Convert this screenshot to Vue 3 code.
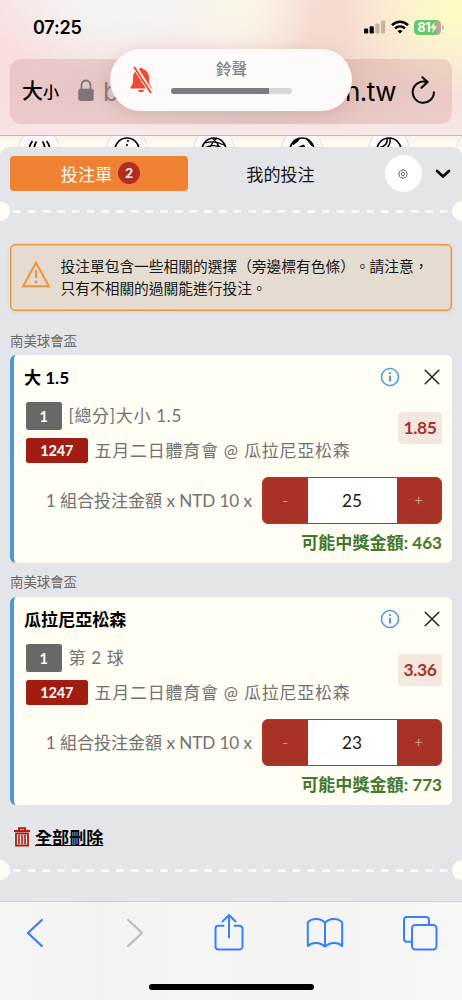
<script setup>
const bets = [
  { league: '南美球會盃', title: '大 1.5', market: '[總分]大小 1.5', odds: '1.85', stake: 25, payout: 463 },
  { league: '南美球會盃', title: '瓜拉尼亞松森', market: '第 2 球', odds: '3.36', stake: 23, payout: 773 }
]
</script>

<template>
  <div class="phone">
    <header class="browser">
      <div class="status">
        <span class="time">07:25</span>
        <div class="signals">
          <svg class="cell" width="22" height="14" viewBox="0 0 22 14">
            <rect x="0" y="8.5" width="4.2" height="5" rx="1.2" />
            <rect x="5.6" y="6.3" width="4.2" height="7.2" rx="1.2" />
            <rect x="11.3" y="3.4" width="4.2" height="10.1" rx="1.2" opacity=".22" />
            <rect x="17" y=".6" width="4.2" height="12.9" rx="1.2" opacity=".22" />
          </svg>
          <svg class="wifi" width="18" height="14" viewBox="0 0 18 14" fill="none" stroke="#000" stroke-width="2.5">
            <path d="M1 5.2C5.500.6 12.500.6 17 5.200" />
            <path d="M4 8.400C6.900 5.700 11.100 5.700 14 8.400" />
            <path d="M6.500 11L9 13.600L11.500 11C10 9.700 8 9.700 6.500 11Z" fill="#000" stroke="none" />
          </svg>
          <div class="battery">
            <span>81</span>
            <svg width="7" height="11" viewBox="0 0 7 11"><path d="M4.700 0L0 6.200H3L2.200 11L7 4.600H4Z" fill="#fff" /></svg>
          </div>
          <i class="nub"></i>
        </div>
      </div>
      <div class="address">
        <span class="aa">大<small>小</small></span>
        <svg class="lock" width="16" height="23" viewBox="0 0 16 23">
          <path d="M3.500 11V6.500a4.500 5 0 0 1 9 0V11" fill="none" stroke="#80747a" stroke-width="1.800" />
          <rect x=".3" y="9.700" width="15.400" height="12.300" rx="2" fill="#80747a" />
        </svg>
        <span class="url-start">b</span>
        <span class="url-end">n.tw</span>
        <svg class="reload" width="25" height="29" viewBox="0 0 25 29" fill="none" stroke="#000" stroke-width="2" stroke-linecap="round" stroke-linejoin="round">
          <path d="M15.500 6.100A10.600 10.600 0 1 0 22.900 16.200" />
          <path d="M11.400 1.300L16.600 6.100L10.500 11.800" />
        </svg>
      </div>
    </header>

    <div class="sports">
      <span><svg viewBox="0 0 26 26"><path d="M6.500 4C4.500 6.500 3.300 8.500 3 13M10.500 4.500C9 6.500 8.200 8.500 8 13M20.500 4C22.500 6.500 23.700 8.500 24 13M16.500 4.500C18 6.500 18.800 8.500 19 13" /></svg></span>
      <span><svg viewBox="0 0 26 26"><circle cx="13" cy="13" r="12" /><path d="M14 3C14 7 12 11 8 14" stroke-dasharray="2 2.200" /></svg></span>
      <span><svg viewBox="0 0 26 26"><circle cx="13" cy="13" r="12" /><path d="M4 6C10 4 17 5 23 8M2 12C9 7 17 8 25 13M16 1C11 5 9 9 8 14M11 1C15 4 18 8 20 14" stroke-width="1.300" /></svg></span>
      <span><svg viewBox="0 0 26 26"><circle cx="13" cy="13" r="12" /><path d="M4 5L10 1L10 3L4 8ZM17 1L22 5L23 9L19 4ZM10 10L15 8L16 13H14L13 11L10 12Z" fill="#000" stroke-width="1" /></svg></span>
      <span><svg viewBox="0 0 26 26"><circle cx="13" cy="13" r="12" /><path d="M11 1C12 6 9 10 2 11M14 1C15 7 12 10 8 14" stroke-width="1.500" /></svg></span>
      <span></span>
    </div>

    <main class="sheet">
      <nav class="tabs">
        <button class="tab active">投注單<b>2</b></button>
        <button class="tab">我的投注</button>
        <button class="settings">
          <svg width="10" height="10" viewBox="0 0 20 20" fill="none" stroke="#444" stroke-width="1.500">
            <path d="M8 1.500h4l.7 2.200 2.200-.7 2.700 2.800-1.100 2 2.200 1.200v2.200l-2.200 1.100 1 2.100-2.700 2.700-2.100-1.100-1 2.500H8.200L7.400 16l-2.300 1-2.600-2.700 1-2.100L1.300 11V9l2.200-1.100-1-2.200L5.200 3l2.100.8z" />
            <circle cx="10" cy="10" r="3.300" />
          </svg>
        </button>
        <svg class="chevron" width="16" height="10" viewBox="0 0 16 10" fill="none" stroke="#000" stroke-width="2.700" stroke-linecap="round"><path d="M2 2L8 7.500L14 2" /></svg>
      </nav>

      <div class="perforation">
        <svg width="436" height="3"><path d="M0 1.500H436" stroke="#fffdf4" stroke-width="2.600" stroke-dasharray="7.600 7.120" /></svg>
      </div>

      <div class="alert">
        <svg width="30" height="28" viewBox="0 0 30 28" fill="none" stroke="#ef9438" stroke-width="2">
          <path d="M15 2.700L28 26.200H2Z" />
          <path d="M15 10V18M15 20.500V23.200" stroke-width="2.200" />
        </svg>
        <p>投注單包含一些相關的選擇（旁邊標有色條）。請注意，<br />只有不相關的過關能進行投注。</p>
      </div>

      <section v-for="bet in bets" :key="bet.title">
        <h3>{{ bet.league }}</h3>
        <article class="card">
          <div class="title">
            <strong>{{ bet.title }}</strong>
            <svg class="info" width="20" height="20" viewBox="0 0 20 20" fill="none" stroke="#539ddd">
              <circle cx="10" cy="10" r="8.500" stroke-width="1.600" />
              <path d="M10 5.300V7.100M10 8.800V14.500" stroke-width="2.200" />
            </svg>
            <svg class="close" width="16" height="16" viewBox="0 0 16 16" fill="none" stroke="#222" stroke-width="1.500" stroke-linecap="round"><path d="M1.200 1.200L14.800 14.800M14.800 1.200L1.200 14.800" /></svg>
          </div>
          <div class="details">
            <div class="lines">
              <div class="line"><span class="tag gray">1</span><span class="label">{{ bet.market }}</span></div>
              <div class="line teams"><span class="tag red">1247</span><span class="label">五月二日體育會 @ 瓜拉尼亞松森</span></div>
            </div>
            <span class="odds">{{ bet.odds }}</span>
          </div>
          <div class="stake">
            <span class="formula">1 組合投注金額 x NTD 10 x</span>
            <div class="stepper">
              <button>-</button>
              <span class="value">{{ bet.stake }}</span>
              <button>+</button>
            </div>
          </div>
          <div class="payout">可能中獎金額: {{ bet.payout }}</div>
        </article>
      </section>

      <div class="clear">
        <svg width="16" height="20" viewBox="0 0 16 20" fill="none" stroke="#aa2117">
          <path d="M0 4H16M5 3V1.200H11V3" stroke-width="2" />
          <path d="M2 6.500V18.500H14V6.500Z" stroke-width="1.800" />
          <path d="M5 8V17M8 8V17M11 8V17" stroke-width="1.600" />
        </svg>
        <a>全部刪除</a>
      </div>

      <div class="perforation last">
        <svg width="436" height="3"><path d="M0 1.500H436" stroke="#fffdf4" stroke-width="2.600" stroke-dasharray="7.600 7.120" /></svg>
      </div>
    </main>

    <footer class="toolbar">
      <div class="actions">
        <svg class="back" width="18" height="30" viewBox="0 0 18 30"><path d="M15.800 2L2 15L15.800 28" /></svg>
        <svg class="forward" width="18" height="30" viewBox="0 0 18 30"><path d="M2.200 2L16 15L2.200 28" /></svg>
        <svg class="share" width="32" height="38" viewBox="0 0 32 38"><path d="M10.500 12.800H5.500a3 3 0 0 0-3 3V33.500a3 3 0 0 0 3 3H26.500a3 3 0 0 0 3-3V15.800a3 3 0 0 0-3-3H21.500M16 24.500V2.300M9.500 8.500L16 2L22.500 8.500" /></svg>
        <svg class="book" width="38" height="32" viewBox="0 0 38 32"><path d="M19 6C15 1 6 .6 1.800 5.500V29C6 25 14 25 19 29.800C24 25 32 25 36.200 29V5.500C32 .6 23 1 19 6ZM19 6V29.800" /></svg>
        <svg class="pages" width="36" height="36" viewBox="0 0 36 36"><path d="M9.500 26.800H5a3 3 0 0 1-3-3V5a3 3 0 0 1 3-3H24a3 3 0 0 1 3 3V9.500" /><rect x="10" y="10" width="24.500" height="24.500" rx="3.200" /></svg>
      </div>
      <div class="home"></div>
    </footer>

    <div class="ringer">
      <svg width="24" height="28" viewBox="0 0 24 28">
        <path d="M1.500 22.500V21C4 19 4 16 4 12C4 7 6.500 4 10 3.300C10.500 1.500 13.500 1.500 14 3.300C17.500 4 20 7 20 12C20 16 20 19 22.500 21V22.500ZM9 24H15C14.500 27 9.500 27 9 24Z" fill="#ec4b38" />
        <path d="M5.500 .5L22.500 27" stroke="#fffafa" stroke-width="4.500" />
        <path d="M5.500 1.500L21.700 26.500" stroke="#ec4b38" stroke-width="1.900" stroke-linecap="round" />
      </svg>
      <div class="level">
        <span>鈴聲</span>
        <div class="track"><i></i></div>
      </div>
    </div>
  </div>
</template>

<style>
body {
  margin: 0;
}
</style>

<style scoped>
* {
  box-sizing: border-box;
}
.phone {
  position: relative;
  width: 462px;
  height: 1000px;
  overflow: hidden;
  display: flex;
  flex-direction: column;
  background: #fffdf4;
  font-family: Lato, "Noto Sans CJK TC", sans-serif;
  font-size: 17px;
  text-spacing-trim: space-all;
  color: #000;
}
button {
  font: inherit;
  border: 0;
  padding: 0;
  background: none;
  color: inherit;
}
svg {
  display: block;
  flex: none;
}
.browser {
  height: 136px;
  flex: none;
  padding: 0 10px;
  border-bottom: 1px solid #c6b9b9;
  background:
    radial-gradient(ellipse 120px 85px at 462px 10px, #fefac5 15%, transparent),
    radial-gradient(ellipse 75px 85px at 240px 0, #fbf7e8 10%, transparent),
    radial-gradient(ellipse 110px 110px at 330px 30px, #f6dad1 20%, transparent),
    radial-gradient(ellipse 150px 75px at 130px 0, #f4f4f3 25%, transparent),
    radial-gradient(ellipse 100px 130px at 0 60px, #fadcde, transparent),
    linear-gradient(#f7e7e5, #f5dfdc 70%, #f8e8e8);
}
.status {
  height: 59px;
  padding: 0 8px 0 23px;
  display: flex;
  justify-content: space-between;
}
.time {
  font: 600 18px/55px Inter, sans-serif;
  letter-spacing: -.2px;
}
.signals {
  height: 54px;
  display: flex;
  align-items: center;
}
.wifi {
  margin: 0 5px 0 5px;
}
.battery {
  width: 27px;
  height: 15px;
  border-radius: 4.500px;
  background: linear-gradient(90deg, #66c967 81%, #b5a795 81%);
  display: flex;
  align-items: center;
  justify-content: center;
  font: 700 12.500px/15px Inter, sans-serif;
  letter-spacing: -.3px;
  color: #fff;
}
.nub {
  width: 2px;
  height: 5px;
  margin-left: 1px;
  border-radius: 0 2px 2px 0;
  background: #c9b9a0;
}
.address {
  height: 65px;
  padding: 0 16px 0 12px;
  border-radius: 11px;
  display: flex;
  align-items: center;
  background: linear-gradient(90deg, rgba(180, 110, 115, .2), rgba(165, 100, 95, .24) 60%, rgba(190, 105, 100, .19));
  font: 400 26px/64px Inter, "Noto Sans CJK TC", sans-serif;
}
.aa {
  width: 56px;
  font-size: 21px;
  font-weight: 500;
  white-space: nowrap;
}
.aa small {
  font-size: 16px;
}
.url-start {
  flex: 1;
  margin-left: 9px;
  color: #8b7d80;
}
.url-end {
  margin-right: 15px;
  letter-spacing: -.5px;
}
.lock,
.reload {
  margin-top: -3px;
}
.sports {
  height: 11px;
  flex: none;
  overflow: hidden;
  display: flex;
  gap: 45.500px;
  padding-left: 18px;
  background: linear-gradient(#f6f3e9, #fffdf4);
}
.sports span {
  width: 42px;
  height: 42px;
  flex: none;
  margin-top: -7px;
  padding: 7px 8px;
  border-radius: 50%;
  border: 1px solid #dfdfe2;
  background: #fafafb;
}
.sports svg {
  width: 26px;
  height: 26px;
  margin-left: -1px;
  fill: none;
  stroke: #000;
  stroke-width: 1.700;
}
.sheet {
  height: 754px;
  flex: none;
  padding: 9px 10px 0;
  border-radius: 9px 9px 0 0;
  background: #e4e5e8;
}
.tabs {
  height: 35px;
  display: flex;
  align-items: center;
}
.tab {
  width: 185px;
  height: 35px;
  padding-bottom: 1px;
  font-size: 17.100px;
  color: #171717;
  display: flex;
  align-items: center;
  justify-content: center;
}
.tab.active {
  width: 178px;
  border-radius: 4px;
  background: #ee8132;
  color: #fffdf4;
  padding-left: 3px;
}
.tab b {
  width: 22px;
  height: 22px;
  margin-left: 6px;
  border-radius: 50%;
  background: #b22c20;
  font-size: 14px;
  line-height: 22px;
}
.settings {
  width: 37px;
  height: 37px;
  margin-left: 11.500px;
  border-radius: 50%;
  background: #fff;
  display: flex;
  align-items: center;
  justify-content: center;
}
.chevron {
  margin-left: 13px;
}
.perforation {
  height: 20px;
  margin: 10px -10px 0;
  padding: 1px 0 0 13px;
  display: flex;
  align-items: center;
  background:
    radial-gradient(circle at 0 50%, #fffdf4 9.500px, transparent 10.200px),
    radial-gradient(circle at 100% 50%, #fffdf4 9.500px, transparent 10.200px);
}
.alert {
  height: 67px;
  margin-top: 23px;
  padding: 0 10px 0 10px;
  display: flex;
  align-items: center;
  border: 1.500px solid #ef9438;
  border-radius: 5px;
  background: #e5dcd1;
  box-shadow: 0 1px 5px rgba(0, 0, 0, .08), inset 0 0 0 .5px #ef9438;
}
.alert svg {
  margin-bottom: 7px;
}
.alert p {
  margin: 0 0 1px 9.500px;
  font-size: 14.730px;
  line-height: 22px;
  white-space: nowrap;
  color: #191919;
}
h3 {
  height: 34px;
  margin: 0;
  font-size: 13.400px;
  line-height: 39px;
  font-weight: 400;
  color: #6b6b6b;
}
section:first-of-type h3 {
  height: 44px;
  line-height: 60px;
}
.card {
  height: 208px;
  border-left: 4px solid #4f97d4;
  border-radius: 6px;
  background: #fffdf4;
  padding: 0 10px 0 12px;
}
.title {
  height: 47px;
  padding: 0 2px 3px 0;
  margin-left: -2px;
  display: flex;
  align-items: center;
}
.title strong {
  flex: 1;
  padding-bottom: 2px;
  font-size: 17.100px;
  letter-spacing: -.02px;
}
.close {
  margin-left: 24px;
}
.details {
  display: flex;
  justify-content: space-between;
}
.line {
  height: 28px;
  margin-bottom: 8px;
  display: flex;
  align-items: center;
  font-size: 17px;
  letter-spacing: .7px;
  color: #727272;
  white-space: nowrap;
}
.label {
  padding-bottom: 3px;
}
.teams {
  height: 25px;
  margin-bottom: 14px;
}
.teams .label {
  letter-spacing: .75px;
}
.tag {
  border-radius: 2.500px;
  font-weight: 700;
  font-size: 14.500px;
  letter-spacing: -.1px;
  text-align: center;
  color: #fffdf4;
}
.gray {
  width: 35.500px;
  height: 28px;
  line-height: 29px;
  margin-right: 7px;
  background: #686868;
}
.red {
  width: 61.500px;
  line-height: 25px;
  margin-right: 7px;
  background: #a31c14;
}
.odds {
  width: 44px;
  height: 32px;
  margin-top: 10px;
  border-radius: 4px;
  background: #f4e7df;
  color: #a83226;
  font-weight: 700;
  font-size: 17.500px;
  letter-spacing: -.4px;
  line-height: 32px;
  text-align: center;
}
.stake {
  height: 47px;
  display: flex;
  align-items: center;
  justify-content: flex-end;
  font-size: 17.100px;
  color: #727272;
}
.formula {
  padding-bottom: 2px;
  letter-spacing: -.06px;
}
.stepper {
  width: 180px;
  height: 47px;
  margin-left: 10px;
  display: flex;
  border: 1.500px solid #b3382b;
  border-radius: 6px;
  overflow: hidden;
  background: #a73225;
}
.stepper button {
  flex: 1;
  padding-bottom: 2px;
  color: #f0d6cc;
  font-size: 16px;
  font-weight: 300;
}
.value {
  width: 89px;
  background: #fff;
  color: #171717;
  font-size: 17.200px;
  line-height: 45px;
  text-align: center;
}
.payout {
  line-height: 38px;
  text-align: right;
  font-size: 17.100px;
  font-weight: 700;
  color: #42782c;
}
.clear {
  height: 55px;
  padding: 9px 0 0 4px;
  display: flex;
  align-items: center;
}
.clear a {
  margin-left: 5px;
  padding-bottom: 2px;
  font-size: 17.100px;
  font-weight: 700;
  text-decoration: underline;
}
.perforation.last {
  margin-top: 0;
}
.toolbar {
  flex: 1;
  border-top: 1px solid #d0d0d3;
  background: linear-gradient(90deg, #f6f6f7, #f2f2f3 22%, #f6f6f7 42%, #f3f3f4 60%, #f7f7f8);
  display: flex;
  flex-direction: column;
  align-items: center;
}
.actions {
  width: 100%;
  height: 62px;
  padding-left: 26px;
  display: flex;
  align-items: center;
}
.actions svg {
  fill: none;
  stroke: #3880f7;
  stroke-width: 2;
  stroke-linecap: round;
  stroke-linejoin: round;
}
.actions .back,
.actions .forward {
  stroke-width: 2.300;
}
.actions .forward {
  margin-left: 82px;
  stroke: #bdbdbe;
}
.actions .share {
  margin: 0 61px 3px 69px;
}
.actions .pages {
  margin-left: 58px;
}
.home {
  width: 165px;
  height: 6px;
  margin-top: 20px;
  border-radius: 3px;
  background: #000;
}
.ringer {
  position: absolute;
  left: 110px;
  top: 49px;
  width: 242px;
  height: 62px;
  padding-left: 19px;
  display: flex;
  align-items: center;
  border-radius: 31px;
  background: #fffafa;
  box-shadow: 0 3px 20px rgba(90, 50, 50, .13);
}
.level {
  height: 36px;
  width: 121px;
  margin-left: 18px;
  display: flex;
  flex-direction: column;
  align-items: center;
  justify-content: space-between;
  padding-bottom: 4px;
  font-size: 15.500px;
  font-weight: 500;
  line-height: 20px;
  color: #858286;
}
.level span {
  margin-top: -3px;
}
.track {
  width: 121px;
  height: 6px;
  border-radius: 3px;
  overflow: hidden;
  background: #dad6d8;
}
.track i {
  display: block;
  width: 81%;
  height: 6px;
  background: #7d7a80;
}
</style>
